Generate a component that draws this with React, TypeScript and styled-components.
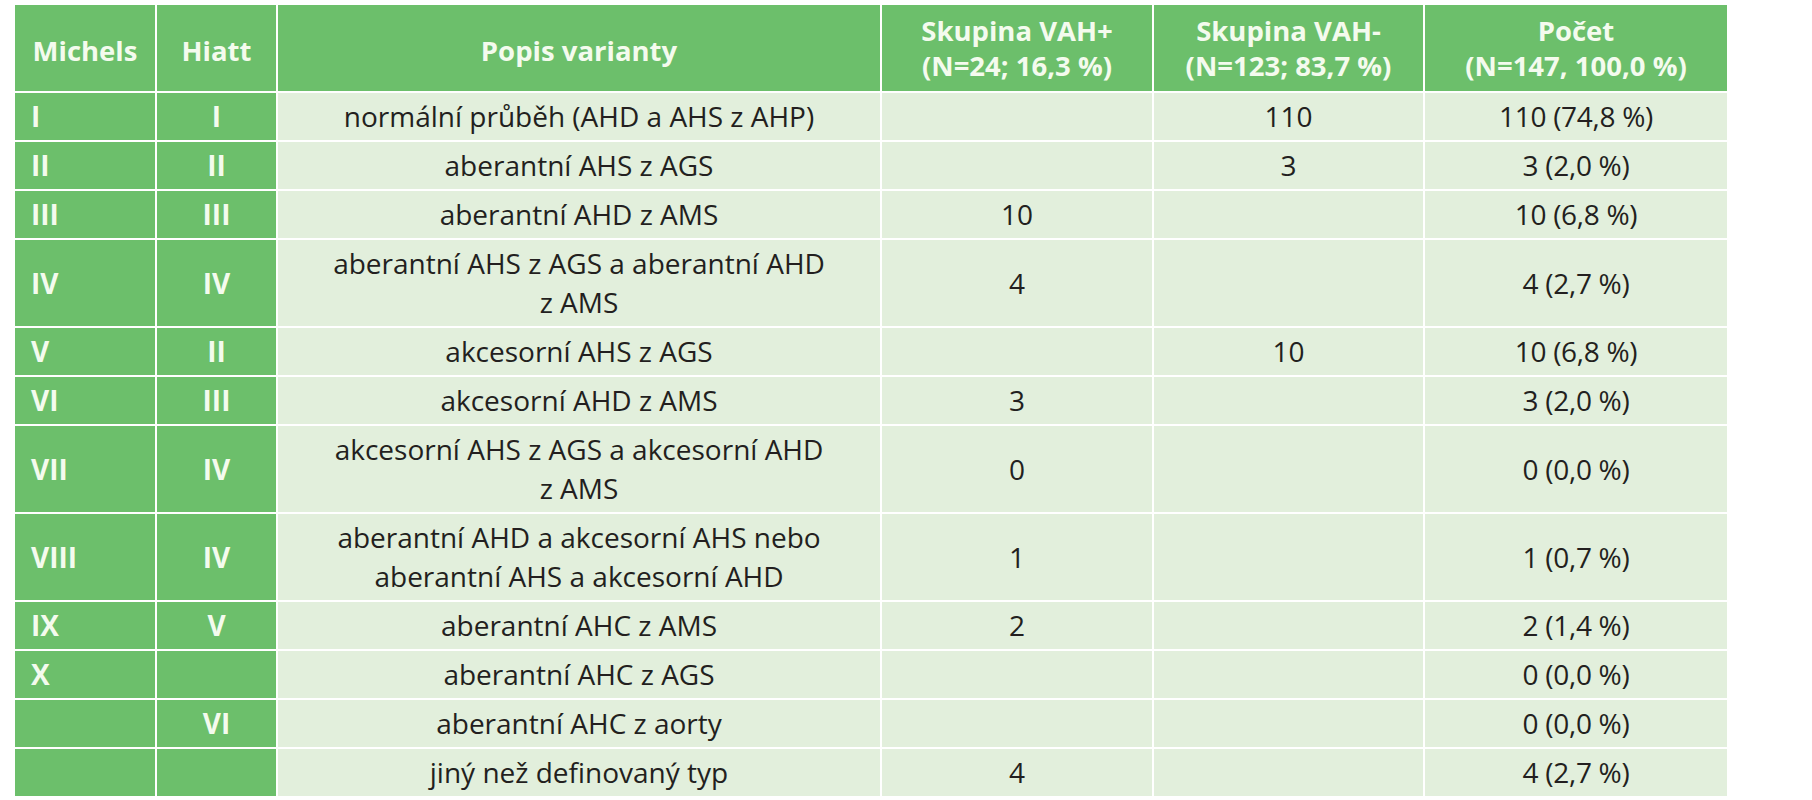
import React from "react";
import styled, { createGlobalStyle } from "styled-components";

const GlobalStyle = createGlobalStyle`
  html, body { margin: 0; padding: 0; background: #ffffff; }
  body { font-family: "Open Sans", "Noto Sans", sans-serif; }
`;

const GREEN = "#6cbf6b";
const LIGHT = "#e2efdc";
const COLS = "140px 119px 602px 270px 269px 302px";

const Page = styled.div`
  padding: 5px 0 0 15px;
`;

const Table = styled.div`
  display: flex;
  flex-direction: column;
  gap: 2px;
  width: 1712px;
  background: #ffffff;
`;

const Row = styled.div`
  display: grid;
  grid-template-columns: ${COLS};
  gap: 2px;
`;

const HeadCell = styled.div<{ $lines?: number }>`
  background: ${GREEN};
  color: #f4fbee;
  font-weight: 700;
  font-size: 27.5px;
  line-height: 35px;
  text-align: center;
  display: flex;
  flex-direction: column;
  align-items: center;
  justify-content: center;
  height: 86px;
  padding-top: ${(p) => (p.$lines === 2 ? "0" : "4px")};
  box-sizing: border-box;
`;

const KeyCell = styled.div<{ $center?: boolean }>`
  background: ${GREEN};
  color: #f4fbee;
  font-weight: 700;
  font-size: 28px;
  line-height: 39px;
  padding: ${(p) => (p.$center ? "4px 0" : "4px 0 4px 16px")};
  display: flex;
  align-items: center;
  justify-content: ${(p) => (p.$center ? "center" : "flex-start")};
`;

const DataCell = styled.div`
  background: ${LIGHT};
  color: #231f20;
  font-size: 28px;
  line-height: 39px;
  padding: 4px 8px;
  text-align: center;
  display: flex;
  flex-direction: column;
  align-items: center;
  justify-content: center;
`;

const TotalCell = styled(DataCell)`
  letter-spacing: -0.3px;
`;

type R = {
  m: string;
  h: string;
  d: string[];
  plus: string;
  minus: string;
  total: string;
};

const rows: R[] = [
  { m: "I", h: "I", d: ["normální průběh (AHD a AHS z AHP)"], plus: "", minus: "110", total: "110 (74,8 %)" },
  { m: "II", h: "II", d: ["aberantní AHS z AGS"], plus: "", minus: "3", total: "3 (2,0 %)" },
  { m: "III", h: "III", d: ["aberantní AHD z AMS"], plus: "10", minus: "", total: "10 (6,8 %)" },
  { m: "IV", h: "IV", d: ["aberantní AHS z AGS a aberantní AHD", "z AMS"], plus: "4", minus: "", total: "4 (2,7 %)" },
  { m: "V", h: "II", d: ["akcesorní AHS z AGS"], plus: "", minus: "10", total: "10 (6,8 %)" },
  { m: "VI", h: "III", d: ["akcesorní AHD z AMS"], plus: "3", minus: "", total: "3 (2,0 %)" },
  { m: "VII", h: "IV", d: ["akcesorní AHS z AGS a akcesorní AHD", "z AMS"], plus: "0", minus: "", total: "0 (0,0 %)" },
  { m: "VIII", h: "IV", d: ["aberantní AHD a akcesorní AHS nebo", "aberantní AHS a akcesorní AHD"], plus: "1", minus: "", total: "1 (0,7 %)" },
  { m: "IX", h: "V", d: ["aberantní AHC z AMS"], plus: "2", minus: "", total: "2 (1,4 %)" },
  { m: "X", h: "", d: ["aberantní AHC z AGS"], plus: "", minus: "", total: "0 (0,0 %)" },
  { m: "", h: "VI", d: ["aberantní AHC z aorty"], plus: "", minus: "", total: "0 (0,0 %)" },
  { m: "", h: "", d: ["jiný než definovaný typ"], plus: "4", minus: "", total: "4 (2,7 %)" },
];

const Line = styled.span`
  display: block;
  white-space: nowrap;
`;

export default function App() {
  return (
    <Page>
      <GlobalStyle />
      <Table>
        <Row>
          <HeadCell>Michels</HeadCell>
          <HeadCell>Hiatt</HeadCell>
          <HeadCell>Popis varianty</HeadCell>
          <HeadCell $lines={2}>
            <Line>Skupina VAH+</Line>
            <Line>(N=24; 16,3 %)</Line>
          </HeadCell>
          <HeadCell $lines={2}>
            <Line>Skupina VAH-</Line>
            <Line>(N=123; 83,7 %)</Line>
          </HeadCell>
          <HeadCell $lines={2}>
            <Line>Počet</Line>
            <Line>(N=147, 100,0 %)</Line>
          </HeadCell>
        </Row>
        {rows.map((r, i) => (
          <Row key={i}>
            <KeyCell>{r.m}</KeyCell>
            <KeyCell $center>{r.h}</KeyCell>
            <DataCell>
              {r.d.map((t, j) => (
                <Line key={j}>{t}</Line>
              ))}
            </DataCell>
            <DataCell>{r.plus}</DataCell>
            <DataCell>{r.minus}</DataCell>
            <TotalCell>{r.total}</TotalCell>
          </Row>
        ))}
      </Table>
    </Page>
  );
}
